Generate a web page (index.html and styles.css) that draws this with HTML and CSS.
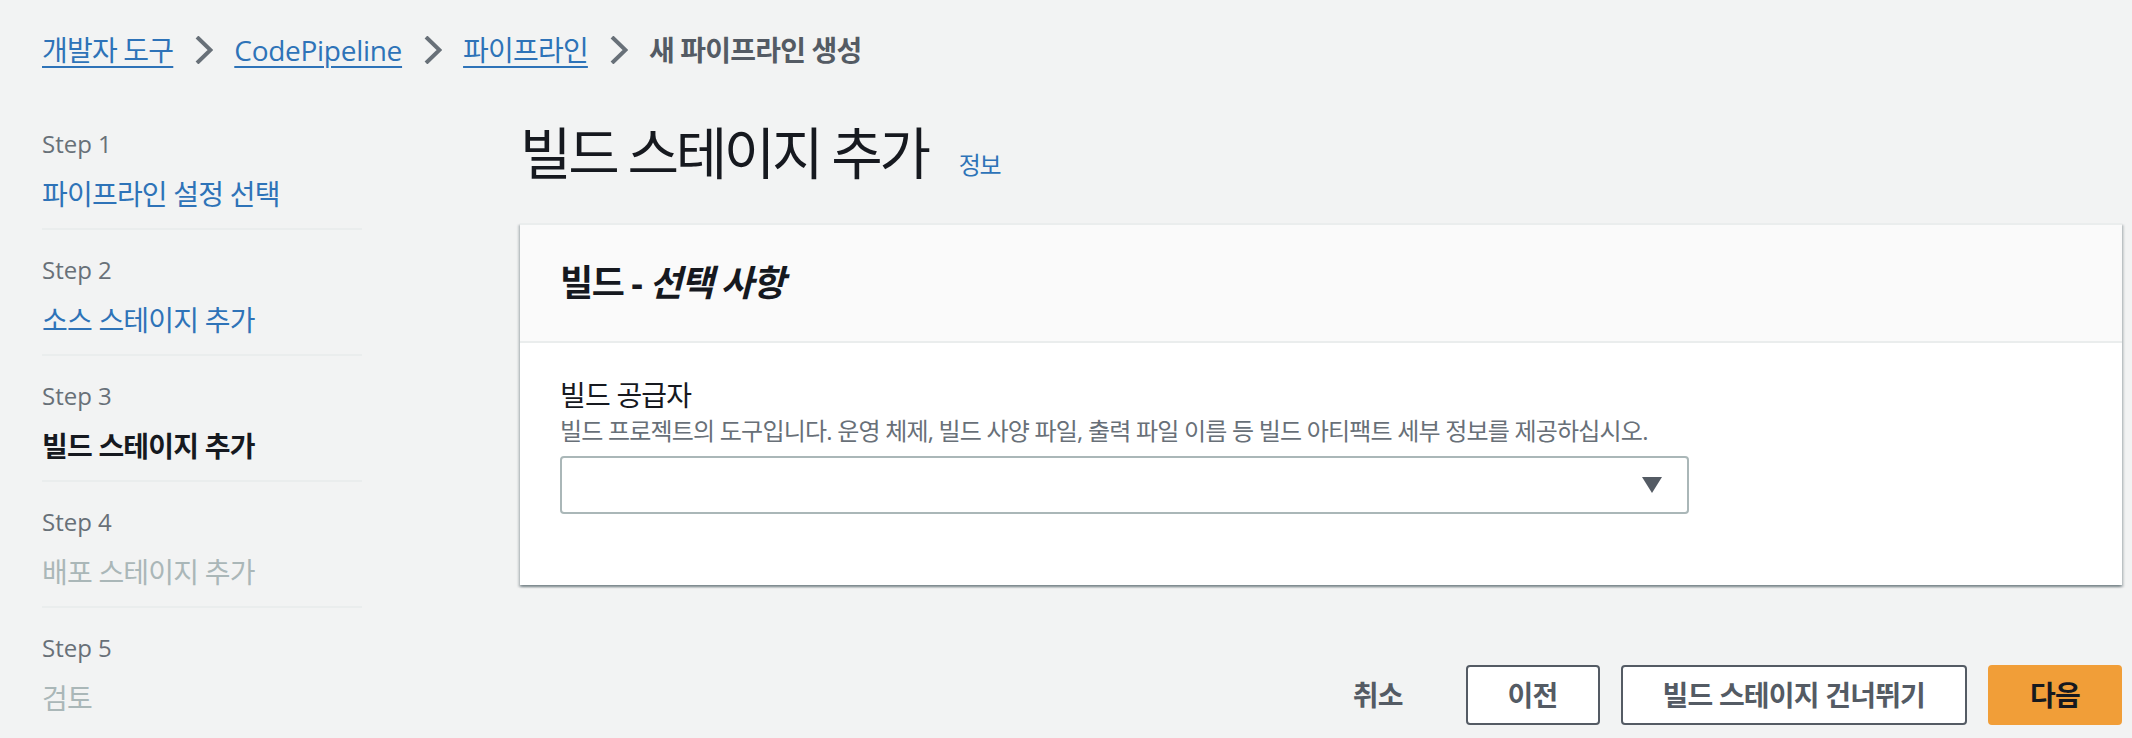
FILE: index.html
```html
<!DOCTYPE html>
<html lang="ko">
<head>
<meta charset="utf-8">
<title>새 파이프라인 생성</title>
<link rel="stylesheet" href="styles.css">
</head>
<body>
<nav class="breadcrumb">
  <a class="crumb-link" href="#">개발자 도구</a>
  <svg class="chev" width="18" height="28" viewBox="0 0 18 28"><path d="M2 1 L15.5 14 L2 27" fill="none" stroke="#687078" stroke-width="4"/></svg>
  <a class="crumb-link latin" href="#">CodePipeline</a>
  <svg class="chev" width="18" height="28" viewBox="0 0 18 28"><path d="M2 1 L15.5 14 L2 27" fill="none" stroke="#687078" stroke-width="4"/></svg>
  <a class="crumb-link" href="#">파이프라인</a>
  <svg class="chev" width="18" height="28" viewBox="0 0 18 28"><path d="M2 1 L15.5 14 L2 27" fill="none" stroke="#687078" stroke-width="4"/></svg>
  <span class="crumb-current">새 파이프라인 생성</span>
</nav>

<div class="layout">
  <ul class="steps">
    <li class="step">
      <div class="step-label">Step 1</div>
      <a class="step-name link" href="#">파이프라인 설정 선택</a>
    </li>
    <li class="step">
      <div class="step-label">Step 2</div>
      <a class="step-name link" href="#">소스 스테이지 추가</a>
    </li>
    <li class="step">
      <div class="step-label">Step 3</div>
      <span class="step-name active">빌드 스테이지 추가</span>
    </li>
    <li class="step">
      <div class="step-label">Step 4</div>
      <span class="step-name disabled">배포 스테이지 추가</span>
    </li>
    <li class="step last">
      <div class="step-label">Step 5</div>
      <span class="step-name disabled">검토</span>
    </li>
  </ul>

  <main class="content">
    <h1 class="title">빌드 스테이지 추가<a class="info" href="#">정보</a></h1>

    <section class="card">
      <header class="card-header">
        <h2>빌드 - <em>선택 사항</em></h2>
      </header>
      <div class="card-body">
        <div class="field-label">빌드 공급자</div>
        <div class="field-desc">빌드 프로젝트의 도구입니다. 운영 체제, 빌드 사양 파일, 출력 파일 이름 등 빌드 아티팩트 세부 정보를 제공하십시오.</div>
        <div class="select">
          <svg width="20" height="16" viewBox="0 0 20 16"><polygon points="0,0 20,0 10,16" fill="#545b64"/></svg>
        </div>
      </div>
    </section>

    <div class="actions">
      <button class="btn btn-link">취소</button>
      <button class="btn">이전</button>
      <button class="btn">빌드 스테이지 건너뛰기</button>
      <button class="btn btn-primary">다음</button>
    </div>
  </main>
</div>
</body>
</html>
```
FILE: styles.css
```css
* { box-sizing: border-box; }

html, body {
  margin: 0;
  padding: 0;
  background: #f2f3f3;
}

body {
  font-family: "Open Sans", "Noto Sans CJK KR", sans-serif;
  color: #16191f;
  width: 2132px;
  height: 738px;
  overflow: hidden;
  letter-spacing: -0.05em;
}

.latin {
  letter-spacing: -0.01em;
}

/* Breadcrumb */
.breadcrumb {
  display: flex;
  align-items: center;
  padding: 30px 0 0 42px;
  height: 70px;
  font-size: 28px;
  line-height: 40px;
}

.crumb-link {
  color: #2e73b8;
  text-decoration: underline;
  text-underline-offset: 5px;
  text-decoration-thickness: 2px;
}

.chev {
  margin: 0 21px 0 22px;
  display: block;
}

.crumb-current {
  color: #545b64;
  font-weight: 700;
}

/* Layout */
.layout {
  display: flex;
  align-items: flex-start;
}

/* Steps nav */
.steps {
  list-style: none;
  margin: 58px 0 0 42px;
  padding: 0;
  width: 320px;
  flex: none;
}

.step {
  padding-bottom: 14px;
  border-bottom: 2px solid #eaeded;
  margin-bottom: 24px;
}

.step.last {
  border-bottom: none;
}

.step-label {
  font-size: 24px;
  line-height: 32px;
  color: #687078;
  letter-spacing: 0;
}

.step-name {
  display: block;
  margin-top: 14px;
  font-size: 28px;
  line-height: 40px;
  text-decoration: none;
}

.step-name.link { color: #2e73b8; }
.step-name.active { color: #16191f; font-weight: 700; }
.step-name.disabled { color: #aab7b8; }

/* Content */
.content {
  margin: 50px 10px 0 158px;
  flex: 1;
}

.title {
  margin: 0;
  font-size: 56px;
  line-height: 64px;
  font-weight: 400;
  color: #16191f;
  letter-spacing: -0.06em;
}

.info {
  font-size: 24px;
  color: #2e73b8;
  text-decoration: none;
  margin-left: 31px;
  letter-spacing: -0.05em;
}

.card {
  margin-top: 26px;
  background: #ffffff;
  border-top: 2px solid #eaeded;
  box-shadow: 0 2px 2px 0 rgba(0, 28, 36, 0.3),
              2px 2px 2px 0 rgba(0, 28, 36, 0.15),
              -2px 2px 2px 0 rgba(0, 28, 36, 0.15);
}

.card-header {
  background: #fafafa;
  border-bottom: 2px solid #eaeded;
  padding: 38px 40px;
}

.card-header h2 {
  margin: 0;
  font-size: 36px;
  line-height: 40px;
  font-weight: 700;
  letter-spacing: -0.04em;
}

.card-header em {
  font-style: italic;
}

.card-body {
  padding: 32px 40px 71px;
}

.field-label {
  font-size: 28px;
  line-height: 40px;
  color: #16191f;
}

.field-desc {
  font-size: 24px;
  line-height: 32px;
  color: #687078;
  margin-bottom: 9px;
}

.select {
  width: 1129px;
  height: 58px;
  border: 2px solid #aab7b8;
  border-radius: 4px;
  background: #fff;
  display: flex;
  align-items: center;
  justify-content: flex-end;
  padding-right: 25px;
}

.select svg { display: block; }

/* Actions */
.actions {
  margin-top: 80px;
  display: flex;
  justify-content: flex-end;
  gap: 21px;
}

.btn {
  font-family: inherit;
  letter-spacing: inherit;
  height: 60px;
  padding: 0 40px;
  font-size: 28px;
  font-weight: 700;
  color: #545b64;
  background: #ffffff;
  border: 2px solid #545b64;
  border-radius: 4px;
  line-height: 1;
}

.btn-link {
  background: transparent;
  border-color: transparent;
}

.btn-primary {
  background: #f19e38;
  border-color: #f19e38;
  color: #16191f;
}
```
